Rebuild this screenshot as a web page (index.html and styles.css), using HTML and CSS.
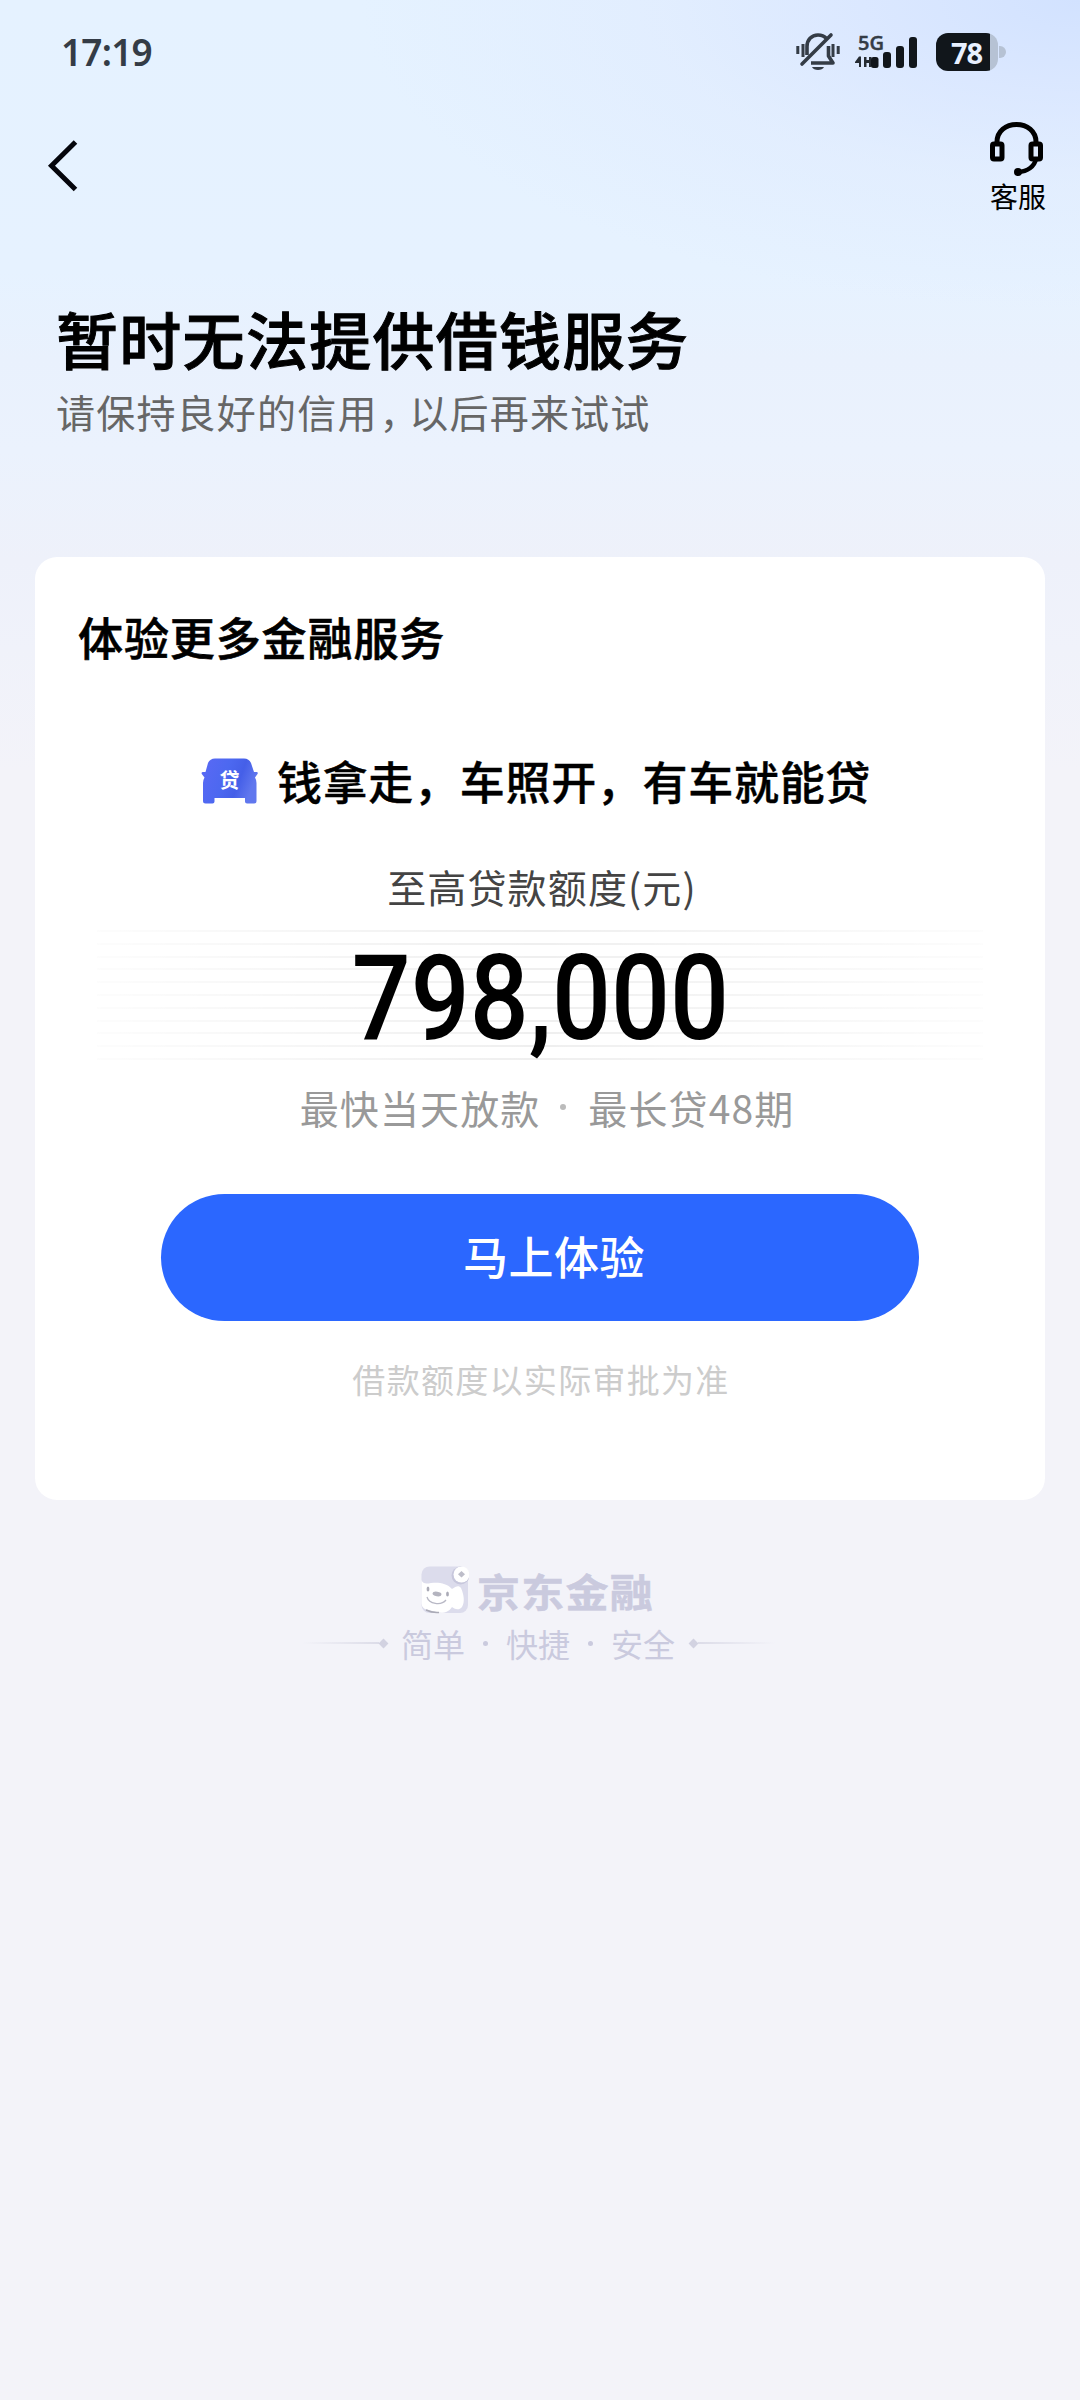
FILE: index.html
```html
<!DOCTYPE html>
<html lang="zh-CN">
<head>
<meta charset="utf-8">
<title>京东金融</title>
<link rel="stylesheet" href="styles.css">
</head>
<body>
<div class="page">
  <div class="status-bar">
    <span class="clock">17:19</span>
    <div class="status-icons">
      <svg class="bell" width="44" height="40" viewBox="0 0 44 40" fill="none" stroke="#343c46" stroke-width="3.6">
        <path d="M11 23V14.500C11 8 15.500 3 22 3C25.500 3 28.500 4.300 30.500 6.500"/>
        <path d="M6 32L35 3" stroke-linecap="round"/>
        <path d="M15 31H37L32.500 24V14" stroke-linejoin="round"/>
        <path d="M16 35H28C26.500 39 17.500 39 16 35Z" fill="#343c46" stroke="none"/>
        <path d="M1.800 14V22M7 12V25M37 12V25M42.200 14V22" stroke-width="3"/>
      </svg>
      <svg class="signal" width="64" height="50" viewBox="0 -9 64 50">
        <text class="network" x="3" y="13.500" textLength="26" lengthAdjust="spacingAndGlyphs">5G</text>
        <path d="M0 26L4 20.500H6V31H4V27H0ZM9 21H11.500V24H14V21H16.500V31H14V27H11.500V31H9Z" fill="#252b32"/>
        <rect x="16" y="21" width="7.500" height="11" rx="2.500" fill="#11161b"/>
        <rect x="28" y="16" width="8" height="16" rx="3" fill="#11161b"/>
        <rect x="41" y="10" width="8" height="22" rx="3" fill="#11161b"/>
        <rect x="54" y="1" width="8" height="31" rx="3" fill="#11161b"/>
      </svg>
      <div class="battery"><span class="battery-level">78</span></div>
    </div>
  </div>

  <div class="nav-bar">
    <svg width="34" height="54" viewBox="0 0 34 54" fill="none" stroke="#05060c" stroke-width="5"><path d="M29.500 3L5.500 26.800L29.500 50.500"/></svg>
    <div class="service">
      <svg width="56" height="56" viewBox="0 0 56 56" fill="none" stroke="#000" stroke-width="5">
        <path d="M7 24V22C7 11 16 4.500 26.500 4.500S46 11 46 22V24"/>
        <rect x="2.500" y="24" width="9.500" height="15" rx="1.500"/>
        <rect x="41" y="24" width="9.500" height="15" rx="1.500"/>
        <path d="M46 39C44.500 46 38 51.500 28 52" stroke-width="4.500"/>
        <circle cx="28" cy="52" r="4" fill="#000" stroke="none"/>
      </svg>
      <span class="service-label">客服</span>
    </div>
  </div>

  <header class="intro">
    <h1 class="intro-title">暂时无法提供借钱服务</h1>
    <p class="intro-sub">请保持良好的信用<span class="comma">，</span>以后再来试试</p>
  </header>

  <main class="card">
    <h2 class="card-title">体验更多金融服务</h2>
    <div class="product">
      <svg class="car" width="57" height="46" viewBox="0 0 57 46">
        <defs><linearGradient id="car-fill" x1="0" y1="0" x2="1" y2="0.3"><stop offset="0" stop-color="#5a69f5"/><stop offset=".5" stop-color="#4c68f0"/><stop offset=".75" stop-color="#455fe8"/><stop offset="1" stop-color="#6077ee"/></linearGradient></defs>
        <path fill="url(#car-fill)" d="M14 .5H43Q48 .5 50 5L53 14H55.500Q57.500 14 56.500 16L54 19.500Q55.500 22 55.500 25V43Q55.500 45.500 53 45.500H46Q44 45.500 44 43.500V40H13.500V43.500Q13.500 45.500 11.500 45.500H4.500Q2 45.500 2 43V25Q2 22 3.500 19.500L.8 16Q0 14 2 14H4.500L7 5Q9 .5 14 .5Z"/>
        <text class="car-text" x="28.500" y="30" text-anchor="middle">贷</text>
      </svg>
      <span class="product-name">钱拿走，车照开，有车就能贷</span>
    </div>
    <p class="amount-label">至高贷款额度(元)</p>
    <div class="amount-band"><span class="amount">798,000</span></div>
    <p class="terms"><span>最快当天放款</span><i class="terms-dot"></i><span>最长贷48期</span></p>
    <button class="cta">马上体验</button>
    <p class="notice">借款额度以实际审批为准</p>
  </main>

  <footer class="brand">
    <div class="brand-row">
      <svg width="48" height="48" viewBox="0 0 48 48">
        <rect x=".5" y=".5" width="46.500" height="46.500" rx="8" fill="#dcdcec"/>
        <path d="M.5 14C2 18 5 18 10 17C17 16 26 17 31 23C35 20 38 19 40 22C43 29 44 36 41 41C38 45 33 43 31 41C28 46 22 48 15 46L4 43C.5 41 .5 38 .5 36Z" fill="#fff"/>
        <circle cx="39.500" cy="9.500" r="9" fill="#c7c7dc"/>
        <circle cx="40.500" cy="8.500" r="8" fill="#fff"/>
        <path d="M40.500 5L44 8.300L40.500 11.600L37 8.300Z" fill="#bdbdc9"/>
        <ellipse cx="16" cy="28" rx="4.500" ry="2.300" transform="rotate(8 16 28)" fill="#b4b4bf"/>
        <ellipse cx="7" cy="23" rx="1.400" ry="2.500" fill="#aaaab6"/>
        <ellipse cx="26.500" cy="28" rx="1.400" ry="2.500" fill="#aaaab6"/>
        <path d="M6 31C8 38 20 40 25 34" fill="none" stroke="#b8b8c5" stroke-width="1.300"/>
        <path d="M5 44Q11 47 18 46.500" fill="none" stroke="#aaaab6" stroke-width="1.500"/>
      </svg>
      <span class="brand-name">京东金融</span>
    </div>
    <div class="slogan">
      <i class="rule"></i><i class="gem"></i>
      <span class="word">简单</span><i class="dot"></i><span class="word">快捷</span><i class="dot"></i><span class="word">安全</span>
      <i class="gem"></i><i class="rule rule-right"></i>
    </div>
  </footer>
</div>
</body>
</html>
```
FILE: styles.css
```css
* { box-sizing: border-box; margin: 0; padding: 0; }
body {
  font-family: "Noto Sans CJK SC", sans-serif;
  background: #f3f3f9;
  color: #000;
}
svg { display: block; }
.page {
  width: 1080px;
  height: 2400px;
  overflow: hidden;
  background:
    radial-gradient(ellipse 720px 310px at 1080px 0, #d2e2ff 0%, rgba(215, 228, 255, .75) 28%, rgba(223, 234, 254, .55) 58%, rgba(229, 242, 255, 0) 100%),
    linear-gradient(180deg, #e5f2ff 0, #e6f2ff 270px, #e9f1fd 360px, #ebf2fd 450px, #eef1fa 560px, #f0f2fa 650px, #f3f3f9 770px);
}
.status-bar {
  display: flex;
  justify-content: space-between;
  align-items: center;
  height: 104px;
  padding: 0 74px 0 61px;
}
.clock { font: 600 37px/50px "Noto Sans", sans-serif; letter-spacing: -.8px; color: #343c46; }
.status-icons { display: flex; align-items: center; }
.bell { margin-right: 15px; }
.signal { margin-right: 17px; overflow: visible; }
.network { font: 600 19px/19px "Open Sans", sans-serif; fill: #343c46; stroke: #343c46; stroke-width: .4px; }
.battery {
  position: relative;
  width: 62px;
  height: 38px;
  border-radius: 12px;
  background: linear-gradient(90deg, #11161b 54px, #b6c2d4 54px);
  margin-right: 8px;
}
.battery::after {
  content: "";
  position: absolute;
  left: 63px;
  top: 13px;
  width: 7px;
  height: 12px;
  border-radius: 0 7px 7px 0;
  background: #b6c2d4;
}
.battery-level {
  display: block;
  padding-left: 15px;
  font: 700 29px/39px "Noto Sans", sans-serif;
  letter-spacing: -1px;
  color: #e8f0ff;
}
.nav-bar {
  display: flex;
  justify-content: space-between;
  align-items: flex-start;
  height: 186px;
  padding: 16px 34px 0 46px;
}
.nav-bar > svg { margin-top: 19px; }
.service { display: flex; flex-direction: column; align-items: center; }
.service-label { font-size: 28px; line-height: 38px; margin-top: 1px; }
.intro { height: 267px; padding: 6px 0 0 56px; }
.intro-title { font-size: 62px; line-height: 84px; font-weight: 500; letter-spacing: 1.300px; -webkit-text-stroke: 1px #000; }
.intro-sub { margin-top: 3px; font-size: 39px; line-height: 56px; letter-spacing: 1.200px; color: #666; }
.comma { font-feature-settings: "halt"; margin: 0 9px 0 2px; }
.card {
  display: flex;
  flex-direction: column;
  align-items: center;
  width: 1010px;
  height: 943px;
  margin: 0 auto;
  border-radius: 22px;
  background: #fff;
}
.card-title { align-self: flex-start; margin: 50px 0 0 43px; font-size: 45px; line-height: 60px; font-weight: 500; letter-spacing: .900px; -webkit-text-stroke: .600px #000; }
.product { display: flex; align-items: center; margin: 84px 8px 0 0; gap: 19px; }
.product-name { font-size: 45px; line-height: 60px; font-weight: 500; letter-spacing: .700px; -webkit-text-stroke: .400px #000; }
.car-text { font-size: 20px; font-weight: 700; fill: #fff; }
.amount-label { margin: 47px 0 0 4px; font-size: 39px; line-height: 56px; letter-spacing: 1.150px; color: #444; }
.amount-band {
  display: flex;
  justify-content: center;
  width: 886px;
  height: 131px;
  margin-top: 16px;
  background:
    linear-gradient(90deg, rgba(255, 255, 255, .85) 0, rgba(255, 255, 255, 0) 50%, rgba(255, 255, 255, .85) 100%),
    repeating-linear-gradient(180deg, #efefef 0, #efefef 2px, #fff 2px, #fff 12.800px);
}
.amount { font: 500 118px/138px Roboto, sans-serif; transform: scaleX(.88); }
.terms { display: flex; align-items: center; margin: 18px 0 0 14px; font-size: 39px; line-height: 56px; letter-spacing: 1.100px; color: #999; }
.terms-dot { width: 6px; height: 6px; border-radius: 50%; background: #bbb; margin: 0 22px 0 20px; }
.cta {
  width: 758px;
  height: 127px;
  margin-top: 59px;
  padding: 0 0 3px 28px;
  border: 0;
  border-radius: 64px;
  background: #2b67ff;
  color: #fff;
  font: 500 45px/60px "Noto Sans CJK SC", sans-serif;
  letter-spacing: .500px;
}
.notice { margin: 33px 0 0 2px; font-size: 33px; line-height: 50px; letter-spacing: 1.300px; color: #ccc; }
.brand { display: flex; flex-direction: column; align-items: center; padding-top: 66px; color: #cacade; }
.brand-row { display: flex; align-items: center; gap: 8px; margin-right: 5px; }
.brand-name { font-size: 43px; line-height: 46px; font-weight: 700; letter-spacing: 1.300px; -webkit-text-stroke: .600px #cacade; transform: scaleY(.9); }
.slogan { display: flex; align-items: center; margin: 5px 3px 0 0; }
.word { font-size: 32px; line-height: 48px; letter-spacing: 0; }
.dot { width: 5px; height: 5px; border-radius: 50%; background: #cacade; margin: 0 18px; }
.gem { width: 7px; height: 7px; background: #d2d2e1; transform: rotate(45deg); margin: 0 14px 0 1px; }
.word + .gem { margin: 0 1px 0 15px; }
.rule { width: 77px; height: 2px; background: linear-gradient(90deg, rgba(208, 208, 224, 0), #dcdce8); }
.rule-right { transform: scaleX(-1); }
```
